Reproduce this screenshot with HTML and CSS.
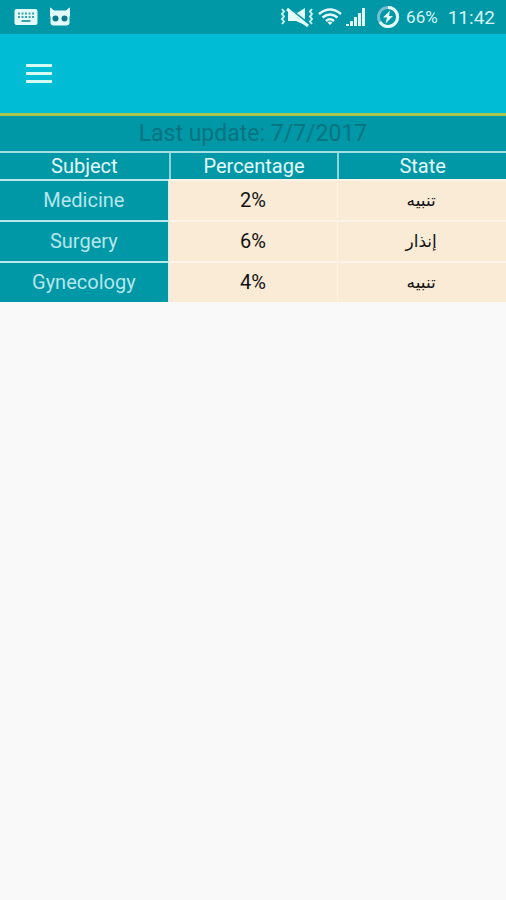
FILE: index.html
```html
<!DOCTYPE html>
<html lang="en">
<head>
<meta charset="utf-8">
<meta name="viewport" content="width=device-width, initial-scale=1">
<title>Attendance</title>
<link rel="stylesheet" href="styles.css">
</head>
<body>
<div class="status-bar">
  <div class="status-group">
    <svg width="24" height="18" viewBox="0 0 24 18" aria-hidden="true">
      <rect x="0.5" y="1" width="23" height="16" rx="2" fill="#e4fbfb"/>
      <path d="M4 5.500h16M4 9h16" stroke="#3aa3ae" stroke-width="2" stroke-dasharray="2 1.500"/>
      <path d="M7.500 13h9" stroke="#3aa3ae" stroke-width="2"/>
    </svg>
    <svg width="22" height="20" viewBox="0 0 22 20" aria-hidden="true">
      <path d="M1.500 1L5 4h12L20.500 1V9H1.500zM2 9h18v7q0 2-2 2H4q-2 0-2-2z" fill="#e4fbfb" stroke="#e4fbfb" stroke-linejoin="round"/>
      <circle cx="6.500" cy="11.500" r="3" fill="#0b7988"/>
      <circle cx="15.500" cy="11.500" r="3" fill="#0b7988"/>
    </svg>
  </div>
  <div class="status-group status-right">
    <svg width="34" height="22" viewBox="0 0 34 22" fill="none" aria-hidden="true">
      <path d="M2 3l2 2.500-2 2.500 2 2.500-2 2.500 2 2.500-2 2.500M32 3l-2 2.500 2 2.500-2 2.500 2 2.500-2 2.500 2 2.500" stroke="#c4f0f2" stroke-width="2"/>
      <path d="M8 5h6l3 2 8-5v17l-9-4H8z" fill="#e4fbfb"/>
      <path d="M9 2l20 16" stroke="#0097a7" stroke-width="2"/>
      <path d="M7 3l21 17" stroke="#e4fbfb" stroke-width="3"/>
    </svg>
    <svg width="24" height="18" viewBox="0 0 24 18" fill="none" stroke="#e4fbfb" aria-hidden="true">
      <path d="M1 6Q12-3 23 6M4.500 9.500Q12 3.500 19.500 9.500M8 13Q12 9.500 16 13" stroke-width="2.500"/>
      <path d="M9.500 14.500Q12 12.500 14.500 14.500L12 17z" fill="#e4fbfb" stroke="none"/>
    </svg>
    <svg width="20" height="20" viewBox="0 0 20 20" fill="#e4fbfb" aria-hidden="true">
      <path d="M0 17h3v2H0zM4 14h3v5H4zM8 10h3v9H8zM12 6h3v13h-3zM16 1h3v18h-3z"/>
    </svg>
    <svg class="icon-battery" width="24" height="24" viewBox="0 0 24 24" fill="none" aria-hidden="true">
      <circle cx="12" cy="12" r="9.500" stroke="#75bfd0" stroke-width="3"/>
      <path d="M12 2.500a9.500 9.500 0 1 1-8 14.500" stroke="#e4fbfb" stroke-width="3"/>
      <path d="M14 5.500L7 12.500h4L9.500 18.500 17 11h-4z" fill="#e4fbfb"/>
    </svg>
    <span class="battery-level">66%</span>
    <span class="clock">11:42</span>
  </div>
</div>
<header class="app-bar">
  <button class="menu-button" type="button" aria-label="Menu">
    <svg width="26" height="20" viewBox="0 0 26 20" fill="#d4fafa" aria-hidden="true">
      <path d="M0 0h26v3H0zM0 8h26v3H0zM0 16h26v3H0z"/>
    </svg>
  </button>
</header>
<main>
  <p class="last-update">Last update: 7/7/2017</p>
  <table class="report">
    <thead>
      <tr><th scope="col">Subject</th><th scope="col">Percentage</th><th scope="col">State</th></tr>
    </thead>
    <tbody>
      <tr><th scope="row">Medicine</th><td>2%</td><td class="state" lang="ar" dir="rtl">تنبيه</td></tr>
      <tr><th scope="row">Surgery</th><td>6%</td><td class="state" lang="ar" dir="rtl">إنذار</td></tr>
      <tr><th scope="row">Gynecology</th><td>4%</td><td class="state" lang="ar" dir="rtl">تنبيه</td></tr>
    </tbody>
  </table>
</main>
</body>
</html>
```
FILE: styles.css
```css
* {
  box-sizing: border-box;
}

body {
  margin: 0;
  background: #f9f9f9;
  font-family: Roboto, "DejaVu Sans", sans-serif;
}

svg {
  display: block;
}

.status-bar {
  display: flex;
  justify-content: space-between;
  align-items: center;
  height: 34px;
  padding: 0 11px 0 14px;
  background: #0097a7;
  color: #d4f5f5;
}

.status-group {
  display: flex;
  align-items: center;
  gap: 11px;
}

.status-right {
  gap: 4px;
}

.icon-battery {
  margin-left: 6px;
}

.battery-level {
  margin-left: 2px;
  font-size: 17px;
}

.clock {
  margin-left: 6px;
  font-size: 19px;
}

.app-bar {
  display: flex;
  align-items: center;
  height: 82px;
  padding: 0 14px;
  background: #00bcd4;
  border-bottom: 3px solid #a8c64c;
}

.menu-button {
  padding: 12px;
  border: 0;
  background: none;
}

.last-update {
  margin: 0;
  background: #0097a7;
  color: #087381;
  font-size: 23px;
  line-height: 35px;
  text-align: center;
}

.report {
  width: 100%;
  table-layout: fixed;
  border-collapse: separate;
  border-spacing: 0;
  border-top: 2px solid #a5e0e4;
  font-size: 20px;
  text-align: center;
}

.report th,
.report td {
  padding: 0;
  font-weight: 400;
}

.report thead th {
  height: 26px;
  background: #0097a7;
  color: #e4fbfb;
  line-height: 26px;
}

.report thead th + th {
  border-left: 2px solid #8fd3d9;
}

.report tbody th,
.report tbody td {
  height: 41px;
  border-top: 2px solid #fdf3e7;
  background: #faebd7;
  color: #111;
  line-height: 39px;
}

.report tbody th {
  border-top-color: #b8e8eb;
  border-right: 1px solid #d3eeee;
  background: #0097a7;
  color: #b5e6ea;
}

.report tbody td + td {
  border-left: 1px solid #fcf1e3;
}

.report tbody .state {
  font-family: "DejaVu Sans", sans-serif;
  font-size: 17px;
}
```
